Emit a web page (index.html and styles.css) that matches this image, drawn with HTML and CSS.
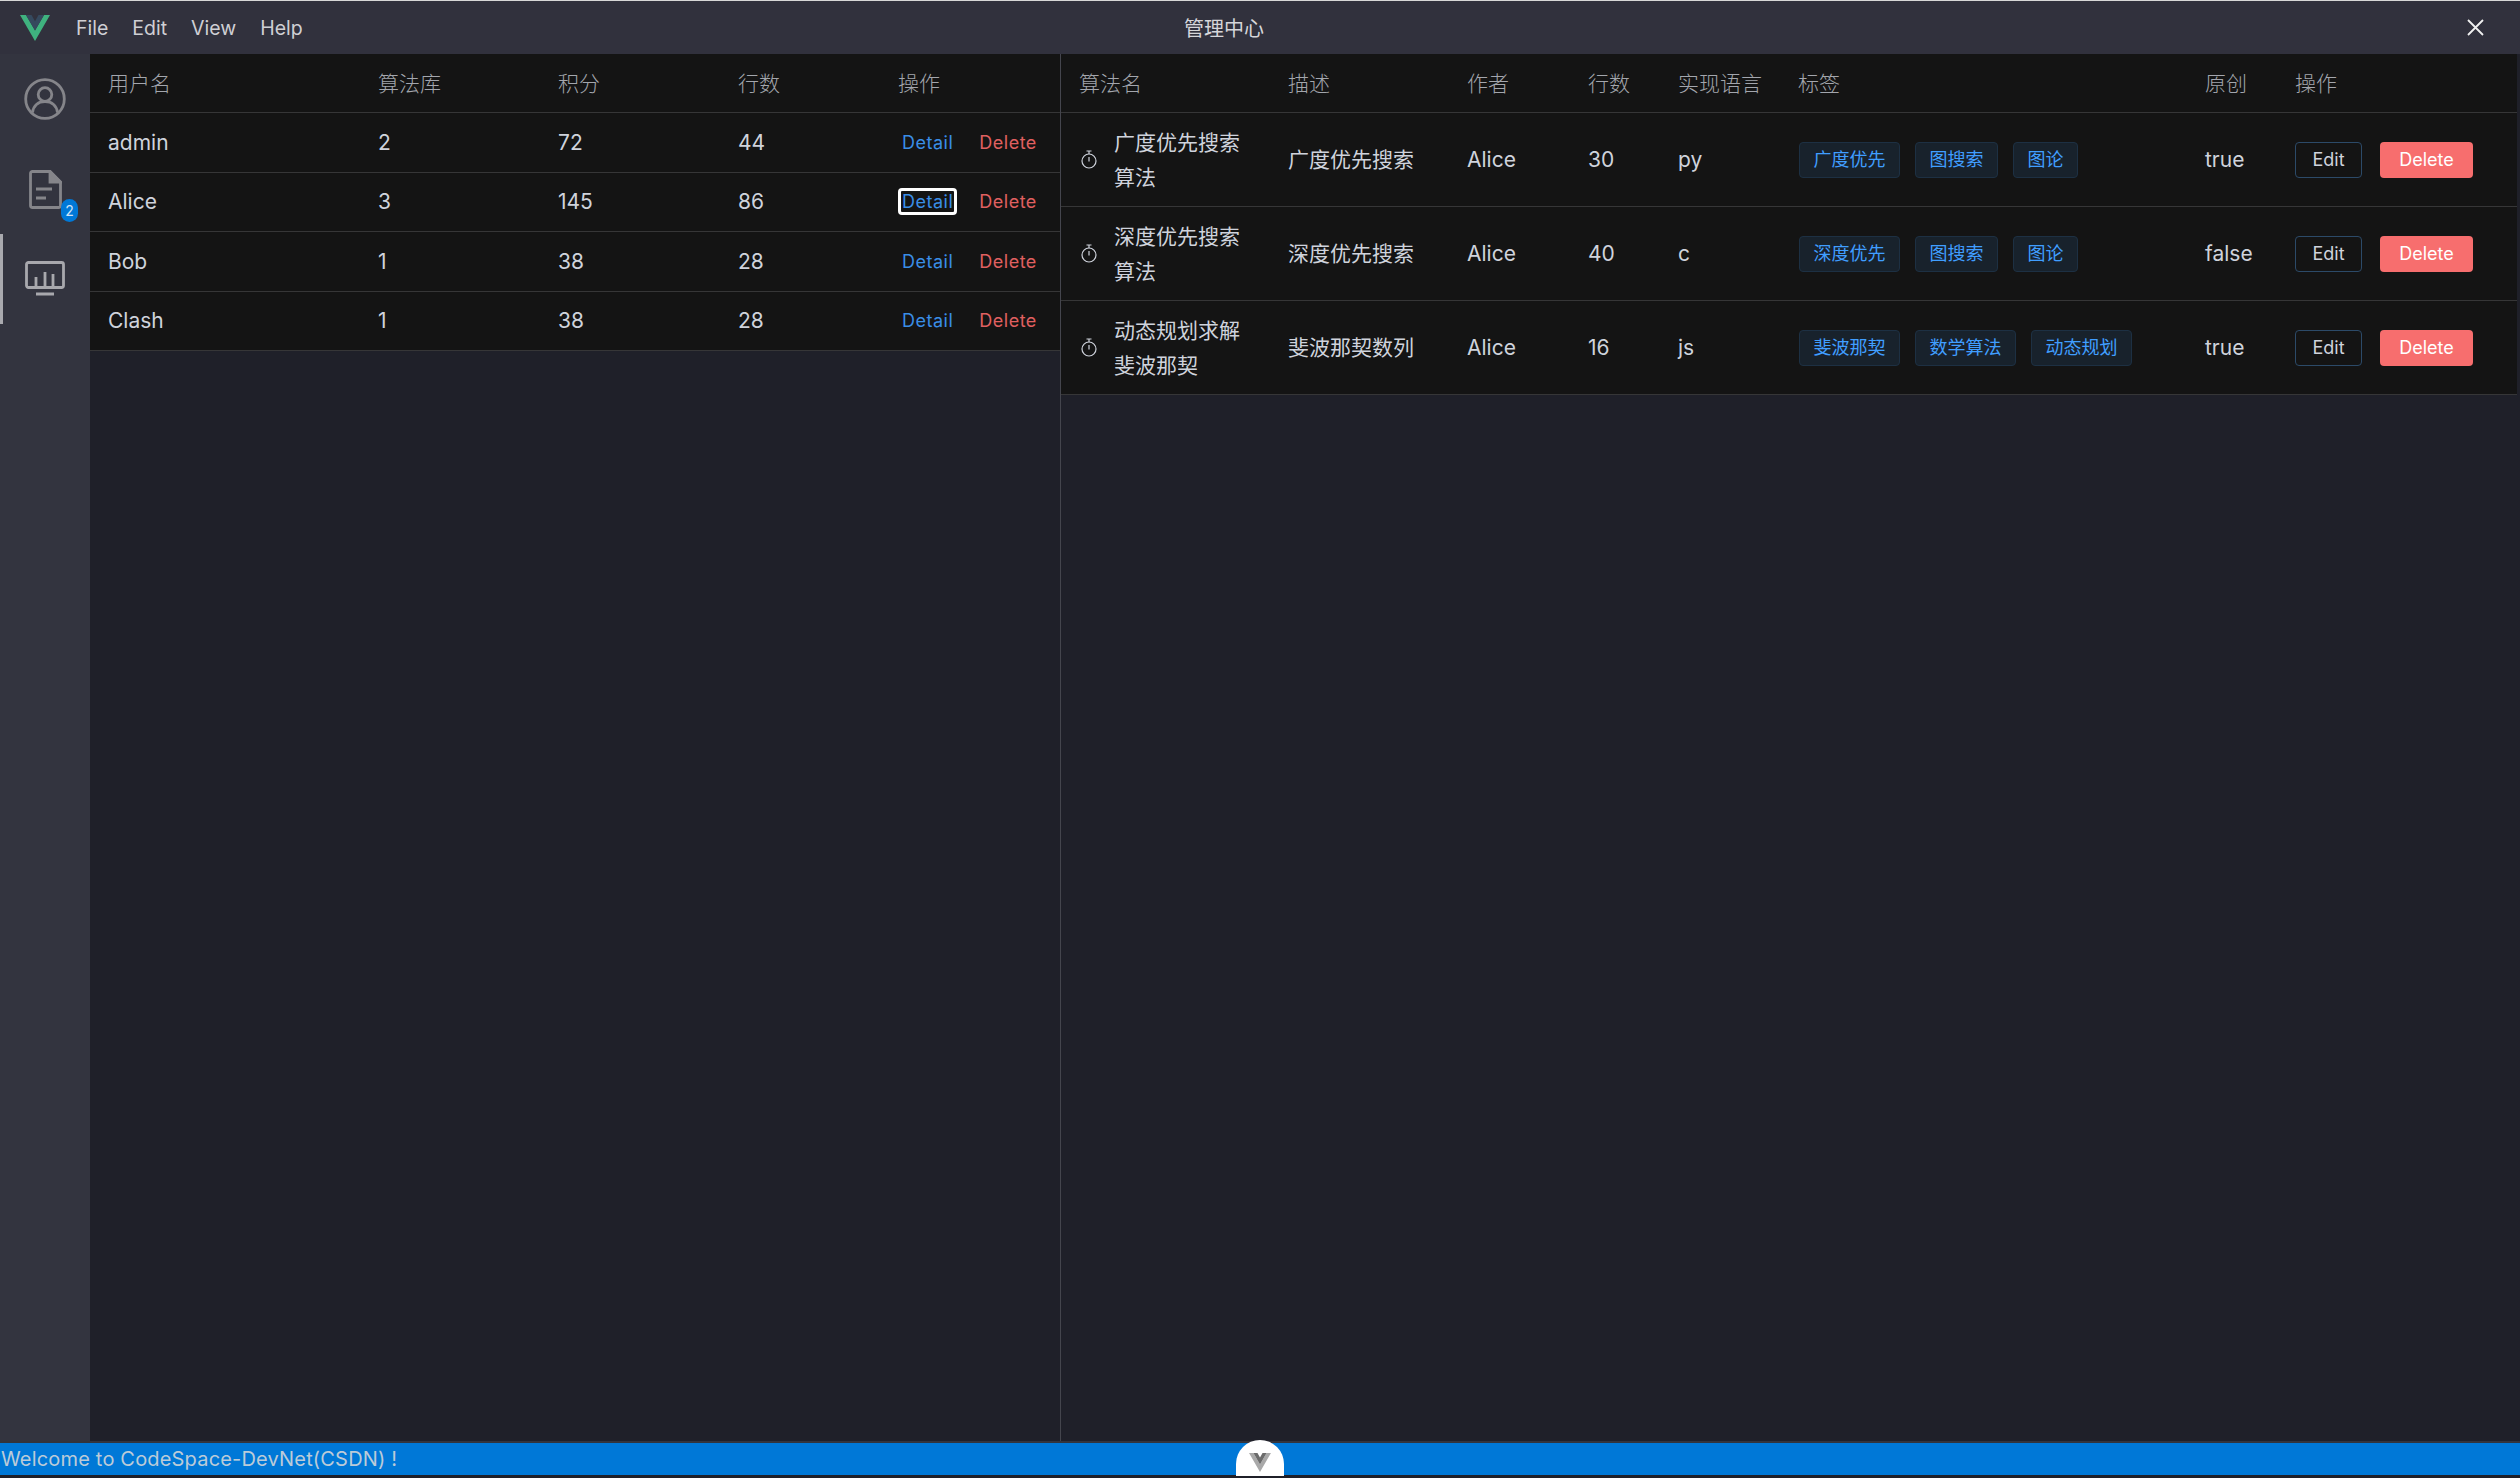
FILE: index.html
```html
<!DOCTYPE html>
<html lang="zh">
<head>
<meta charset="utf-8">
<title>管理中心</title>
<link rel="stylesheet" href="styles.css">
</head>
<body>
<div class="app">
  <header class="titlebar">
    <div class="titlebar-left">
      <svg class="logo" viewBox="0 0 30 26"><path d="M0 0h6l9 15.600L24 0h6L15 26z" fill="#3fb27f"/><path d="M6 0h5.500L15 6.200 18.500 0H24l-9 15.600z" fill="#35495e"/></svg>
      <nav class="menu"><span>File</span><span>Edit</span><span>View</span><span>Help</span></nav>
    </div>
    <div class="app-title">管理中心</div>
    <svg class="close" viewBox="0 0 17 17"><path d="M1 1l15 15M16 1L1 16" stroke="#f0f0f0" stroke-width="1.800" fill="none"/></svg>
  </header>
  <div class="main">
    <aside class="sidebar">
      <div class="side-item">
        <svg class="icon-user" viewBox="0 0 42 42" fill="none" stroke="#85858a" stroke-width="2.800"><circle cx="21" cy="21" r="19.300"/><circle cx="21" cy="16.500" r="6.800"/><path d="M8.500 34.500c1-7 6-11 12.500-11s11.500 4 12.500 11"/></svg>
      </div>
      <div class="side-item has-badge">
        <svg class="icon-doc" viewBox="0 0 33 39" fill="none" stroke="#85858a" stroke-width="2.800"><path d="M21 1.500H3.500a2 2 0 0 0-2 2v32a2 2 0 0 0 2 2h26a2 2 0 0 0 2-2V12z"/><path d="M21 1.500V12h10.500z" fill="#85858a"/><path d="M7 19h16M7 28h10"/></svg>
        <span class="badge">2</span>
      </div>
      <div class="side-item active">
        <svg class="icon-chart" viewBox="0 0 40 35" fill="none" stroke="#a8a8ad" stroke-width="2.800"><rect x="1.500" y="1.500" width="37" height="25" rx="2"/><path d="M11 25v-9M20 25V11M28 25v-12M11 33h18"/></svg>
      </div>
    </aside>
    <section class="panel-left">
      <table class="grid users">
        <colgroup><col class="u1"><col class="u2"><col class="u3"><col class="u4"><col class="u5"></colgroup>
        <thead><tr><th>用户名</th><th>算法库</th><th>积分</th><th>行数</th><th>操作</th></tr></thead>
        <tbody>
          <tr><td>admin</td><td>2</td><td>72</td><td>44</td><td class="ops"><a class="link detail">Detail</a><a class="link danger">Delete</a></td></tr>
          <tr><td>Alice</td><td>3</td><td>145</td><td>86</td><td class="ops"><a class="link detail focus">Detail</a><a class="link danger">Delete</a></td></tr>
          <tr><td>Bob</td><td>1</td><td>38</td><td>28</td><td class="ops"><a class="link detail">Detail</a><a class="link danger">Delete</a></td></tr>
          <tr><td>Clash</td><td>1</td><td>38</td><td>28</td><td class="ops"><a class="link detail">Detail</a><a class="link danger">Delete</a></td></tr>
        </tbody>
      </table>
    </section>
    <section class="panel-right">
      <table class="grid algos">
        <colgroup><col class="a1"><col class="a2"><col class="a3"><col class="a4"><col class="a5"><col class="a6"><col class="a7"><col class="a8"></colgroup>
        <thead><tr><th>算法名</th><th>描述</th><th>作者</th><th>行数</th><th>实现语言</th><th>标签</th><th>原创</th><th>操作</th></tr></thead>
        <tbody>
          <tr>
            <td><div class="algo-name"><svg class="timer" viewBox="0 0 16 19" fill="none" stroke="#cfd3dc" stroke-width="1.200"><circle cx="8" cy="11" r="7"/><path d="M8 7v4.500M5.500 1h5M8 1v3"/></svg><span>广度优先搜索算法</span></div></td>
            <td class="desc">广度优先搜索</td><td>Alice</td><td>30</td><td>py</td>
            <td><div class="tags"><span class="tag">广度优先</span><span class="tag">图搜索</span><span class="tag">图论</span></div></td>
            <td>true</td>
            <td><div class="btns"><button class="btn edit">Edit</button><button class="btn del">Delete</button></div></td>
          </tr>
          <tr>
            <td><div class="algo-name"><svg class="timer" viewBox="0 0 16 19" fill="none" stroke="#cfd3dc" stroke-width="1.200"><circle cx="8" cy="11" r="7"/><path d="M8 7v4.500M5.500 1h5M8 1v3"/></svg><span>深度优先搜索算法</span></div></td>
            <td class="desc">深度优先搜索</td><td>Alice</td><td>40</td><td>c</td>
            <td><div class="tags"><span class="tag">深度优先</span><span class="tag">图搜索</span><span class="tag">图论</span></div></td>
            <td>false</td>
            <td><div class="btns"><button class="btn edit">Edit</button><button class="btn del">Delete</button></div></td>
          </tr>
          <tr>
            <td><div class="algo-name"><svg class="timer" viewBox="0 0 16 19" fill="none" stroke="#cfd3dc" stroke-width="1.200"><circle cx="8" cy="11" r="7"/><path d="M8 7v4.500M5.500 1h5M8 1v3"/></svg><span>动态规划求解斐波那契</span></div></td>
            <td class="desc">斐波那契数列</td><td>Alice</td><td>16</td><td>js</td>
            <td><div class="tags"><span class="tag">斐波那契</span><span class="tag">数学算法</span><span class="tag">动态规划</span></div></td>
            <td>true</td>
            <td><div class="btns"><button class="btn edit">Edit</button><button class="btn del">Delete</button></div></td>
          </tr>
        </tbody>
      </table>
    </section>
  </div>
  <footer class="statusbar">
    <span class="status-text">Welcome to CodeSpace-DevNet(CSDN) !</span>
    <div class="fab"><svg class="fab-logo" viewBox="0 0 30 26"><path d="M0 0h6l9 15.600L24 0h6L15 26z" fill="#a9a9a9"/><path d="M6 0h5.500L15 6.200 18.500 0H24l-9 15.600z" fill="#6c6c6c"/></svg></div>
  </footer>
</div>
</body>
</html>
```
FILE: styles.css
```css
* { box-sizing: border-box; }
html, body { margin: 0; padding: 0; height: 100%; }
body {
  background: #1f2029;
  font-family: "Inter", "Noto Sans CJK SC", sans-serif;
  font-size: 21px;
  color: #cfd3dc;
  overflow: hidden;
}
.app { display: flex; flex-direction: column; height: 1478px; }

.titlebar {
  flex: 0 0 54px;
  display: flex;
  align-items: center;
  background: #31313d;
  border-top: 1px solid #d8d8d8;
  padding-right: 36px;
}
.titlebar-left { flex: 0 0 1184px; display: flex; align-items: center; padding-left: 20px; }
.logo { width: 30px; height: 26px; margin-right: 26px; }
.menu { display: flex; gap: 24px; font-size: 19.500px; color: #cfcfd4; }
.app-title { font-size: 20px; color: #d6d6da; }
.close { width: 17px; height: 17px; margin-left: auto; }

.main { flex: 1; display: flex; min-height: 0; }
.sidebar { flex: 0 0 90px; background: #33343f; display: flex; flex-direction: column; }
.side-item { height: 90px; display: flex; align-items: center; justify-content: center; position: relative; }
.icon-user { width: 42px; height: 42px; }
.icon-doc { width: 33px; height: 39px; }
.icon-chart { width: 40px; height: 35px; margin-top: -2px; }
.side-item.active { border-left: 3px solid #a9a9ae; padding-right: 3px; }
.badge {
  position: absolute; left: 61px; top: 55px; width: 17px; height: 23px;
  border-radius: 9px; background: #0078d7; color: #cfe4f7;
  font-size: 14px; line-height: 23px; text-align: center;
}

.panel-left { flex: 0 0 970px; }
.panel-right { flex: 0 0 1460px; border-left: 1px solid #44454d; padding-right: 3px; }

.grid { width: 100%; table-layout: fixed; border-collapse: separate; border-spacing: 0; background: #141414; }
.grid th {
  height: 59px; padding: 0 18px 3px; text-align: left; font-weight: 300;
  color: #a3a6ad; border-bottom: 1px solid #363637; font-size: 21px;
}
.grid td { padding: 0 18px; border-bottom: 1px solid #363637; color: #cfd3dc; }
.grid td.desc { padding-bottom: 3px; }
.users td { height: 59.500px; }
.algos td { height: 94px; }

.u1 { width: 270px; } .u2 { width: 180px; } .u3 { width: 180px; } .u4 { width: 160px; } .u5 { width: 180px; }
.a1 { width: 209px; } .a2 { width: 179px; } .a3 { width: 121px; } .a4 { width: 90px; }
.a5 { width: 120px; } .a6 { width: 407px; } .a7 { width: 90px; } .a8 { width: 240px; }

.ops { white-space: nowrap; font-size: 18px; letter-spacing: .5px; }
.link { display: inline-block; line-height: 27px; padding: 0 4px; border-radius: 4px; }
.detail { color: #3a8ee6; }
.danger { color: #e06060; margin-left: 18px; }
.focus { outline: 3px solid #fff; outline-offset: -3px; }

.algo-name { display: flex; align-items: center; line-height: 35px; }
.timer { flex: 0 0 16px; width: 16px; height: 19px; margin: 0 17px 0 2px; }

.tags { display: flex; gap: 15px; margin-left: 1px; }
.tag {
  height: 36px; line-height: 34px; padding: 0 13.500px; font-size: 18px;
  color: #409eff; background: #18222c; border: 1px solid #1d3043; border-radius: 4px; white-space: nowrap;
}

.btns { display: flex; gap: 18px; }
.btn { height: 36px; padding: 0; border-radius: 4px; font-family: inherit; font-size: 18px; }
.edit { width: 67px; background: #141414; color: #cfd3dc; border: 1px solid #2c4a68; }
.del { width: 93px; background: #f76e6e; color: #fff; border: 0; }

.statusbar {
  flex: 0 0 35px;
  position: relative;
  border-top: 2px solid #33343c;
  border-bottom: 3px solid #1f2029;
  background: #0078d7;
  line-height: 32px;
  padding-left: 1px;
  font-size: 20px;
  letter-spacing: .18px;
  color: #bccbd8;
}
.fab {
  position: absolute; left: 1236px; top: -3px; width: 48px; height: 36px;
  background: #fff; border-radius: 24px 24px 0 0;
  display: flex; justify-content: center; padding-top: 13px;
}
.fab-logo { width: 22px; height: 19px; }
```
